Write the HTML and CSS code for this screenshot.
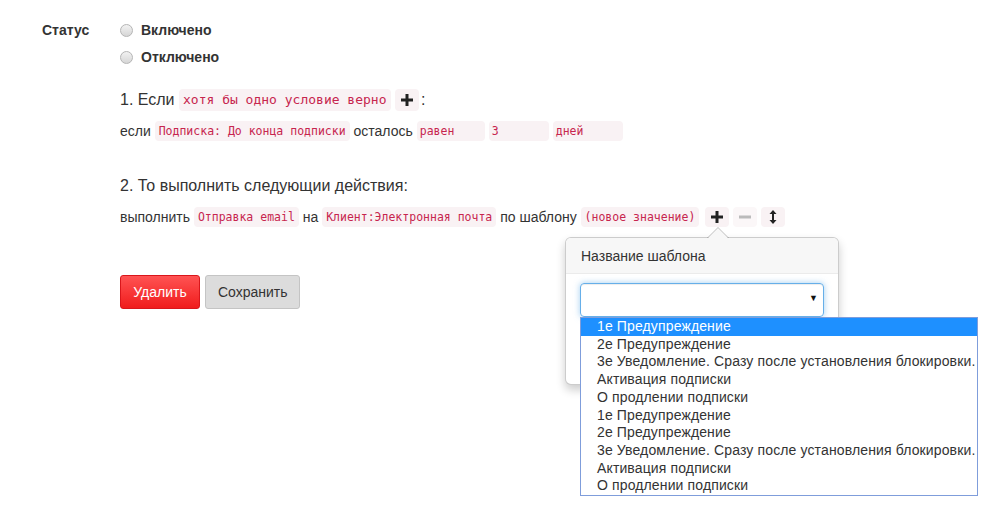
FILE: index.html
```html
<!DOCTYPE html>
<html lang="ru">
<head>
<meta charset="utf-8">
<link rel="stylesheet" href="styles.css">
</head>
<body>
<div class="page">
  <div class="status">
    <div class="status-label">Статус</div>
    <div class="radios">
      <div class="radio"><span class="dot"></span>Включено</div>
      <div class="radio"><span class="dot"></span>Отключено</div>
    </div>
  </div>

  <div class="rule">
    <div class="head head1">1. Если <code class="big">хотя бы одно условие верно</code> <span class="btn-ico big-ico"><svg width="12" height="12" viewBox="0 0 12 12"><rect x="4.5" y="0" width="3" height="12" fill="#222"/><rect x="0" y="4.5" width="12" height="3" fill="#222"/></svg></span><span class="colon">:</span></div>
    <div class="line line1">если <code>Подписка: До конца подписки</code> осталось<code class="fld w68">равен</code><code class="fld w60">3</code><code class="fld w70">дней</code></div>

    <div class="head head2">2. То выполнить следующии действия:</div>
    <div class="line line2">выполнить <code>Отправка email</code> на <code>Клиент:Электронная почта</code> по шаблону <code>(новое значение)</code><span class="ico-group"><span class="btn-ico"><svg width="12" height="12" viewBox="0 0 12 12"><rect x="4.5" y="0" width="3" height="12" fill="#222"/><rect x="0" y="4.5" width="12" height="3" fill="#222"/></svg></span><span class="btn-ico dim"><svg width="12" height="12" viewBox="0 0 12 12"><rect x="0" y="4.5" width="12" height="3" fill="#bbb"/></svg></span><span class="btn-ico"><svg width="8" height="14" viewBox="0 0 8 14"><rect x="3" y="3" width="2" height="8" fill="#222"/><path d="M4 0 L7.5 4 L0.5 4 Z" fill="#222"/><path d="M4 14 L7.5 10 L0.5 10 Z" fill="#222"/></svg></span></span></div>

    <div class="actions">
      <button class="btn btn-danger">Удалить</button>
      <button class="btn btn-default">Сохранить</button>
    </div>
  </div>

  <div class="popover">
    <div class="arrow"></div>
    <div class="popover-title">Название шаблона</div>
    <div class="popover-body">
      <div class="select"><span class="caret">▼</span></div>
    </div>
  </div>

  <ul class="options">
    <li class="selected">1е Предупреждение</li>
    <li>2е Предупреждение</li>
    <li>3е Уведомление. Сразу после установления блокировки.</li>
    <li>Активация подписки</li>
    <li>О продлении подписки</li>
    <li>1е Предупреждение</li>
    <li>2е Предупреждение</li>
    <li>3е Уведомление. Сразу после установления блокировки.</li>
    <li>Активация подписки</li>
    <li>О продлении подписки</li>
  </ul>
</div>
</body>
</html>
```

FILE: styles.css
```css
html, body {
  margin: 0;
  padding: 0;
  background: #fff;
}
body {
  font-family: "Liberation Sans", Arial, sans-serif;
  font-size: 14px;
  color: #333;
}
.page {
  position: relative;
  width: 993px;
  height: 519px;
  overflow: hidden;
}
.status {
  display: flex;
  padding: 21px 0 0 42px;
}
.status-label {
  width: 78px;
  font-weight: bold;
  line-height: 18px;
}
.radios {
  display: flex;
  flex-direction: column;
  gap: 9px;
}
.radio {
  display: flex;
  align-items: center;
  font-weight: bold;
  line-height: 18px;
  color: #333;
}
.dot {
  display: inline-block;
  width: 11px;
  height: 11px;
  border-radius: 50%;
  border: 1px solid #b5b5b5;
  background: linear-gradient(#f2f2f2, #d6d6d6);
  margin-right: 8px;
}
.rule {
  padding-left: 120px;
}
.head {
  font-size: 16px;
  line-height: 22px;
  height: 22px;
}
.head1 {
  margin-top: 23px;
}
.line {
  line-height: 20px;
  height: 20px;
  white-space: nowrap;
}
.line1 {
  margin-top: 10px;
}
.head2 {
  margin-top: 34px;
}
.line2 {
  margin-top: 10px;
}
code {
  font-family: "DejaVu Sans Mono", "Liberation Mono", monospace;
  font-size: 11.5px;
  color: #c7254e;
  background: #f9f2f4;
  border-radius: 4px;
  padding: 0 4px;
  line-height: 20px;
  height: 20px;
  display: inline-block;
  vertical-align: top;
  box-sizing: border-box;
}
code.big {
  font-size: 13px;
  height: 22px;
  line-height: 22px;
  padding: 0 4px;
}
code.fld {
  padding: 0 3px;
  margin-left: 4px;
}
.w68 { width: 68px; margin-left: 5px; }
.w60 { width: 60px; }
.w70 { width: 70px; }
.btn-ico {
  display: inline-flex;
  align-items: center;
  justify-content: center;
  width: 24px;
  height: 20px;
  background: #f9f2f4;
  border-radius: 4px;
  vertical-align: top;
}
.big-ico {
  height: 22px;
}
.colon {
  margin-left: 2px;
}
.ico-group {
  display: inline-flex;
  gap: 4px;
  margin-left: 6px;
  vertical-align: top;
}
.btn-ico.dim {
  background: #fbf7f8;
}
.actions {
  margin-top: 48px;
  display: flex;
  gap: 5px;
}
.btn {
  font-family: "Liberation Sans", Arial, sans-serif;
  font-size: 14px;
  height: 34px;
  border-radius: 3px;
  padding: 0 12px;
  cursor: pointer;
}
.btn-danger {
  width: 80px;
  color: #fff;
  background: linear-gradient(#ff5353, #f01c1c);
  border: 1px solid #d9161b;
}
.btn-default {
  width: 95px;
  color: #333;
  background: #dcdcdc;
  border: 1px solid #c4c4c4;
}
.popover {
  position: absolute;
  left: 565px;
  top: 237px;
  width: 272px;
  height: 146px;
  background: #fff;
  border: 1px solid rgba(0,0,0,0.2);
  border-radius: 6px;
  box-shadow: 0 5px 10px rgba(0,0,0,0.2);
}
.arrow {
  position: absolute;
  left: 141px;
  top: -11px;
  width: 0;
  height: 0;
  border-left: 11px solid transparent;
  border-right: 11px solid transparent;
  border-bottom: 11px solid rgba(0,0,0,0.25);
}
.arrow::after {
  content: "";
  position: absolute;
  left: -10px;
  top: 1px;
  border-left: 10px solid transparent;
  border-right: 10px solid transparent;
  border-bottom: 10px solid #f7f7f7;
}
.popover-title {
  background: #f7f7f7;
  border-bottom: 1px solid #ebebeb;
  border-radius: 5px 5px 0 0;
  height: 35px;
  line-height: 36px;
  padding: 0 15px;
  font-size: 14px;
}
.popover-body {
  padding: 9px 14px;
}
.select {
  position: relative;
  height: 32px;
  border: 1px solid #66afe9;
  border-radius: 4px;
  box-shadow: inset 0 1px 1px rgba(0,0,0,.075), 0 0 6px rgba(102,175,233,.6);
}
.caret {
  position: absolute;
  right: 5px;
  top: 9px;
  font-size: 9px;
  color: #111;
}
.options {
  position: absolute;
  left: 580px;
  top: 317px;
  width: 396px;
  margin: 0;
  padding: 0;
  list-style: none;
  background: #fff;
  border: 1px solid #7f9ddb;
  font-size: 14px;
  line-height: 17.7px;
  letter-spacing: 0.13px;
}
.options li {
  padding-left: 16px;
  white-space: nowrap;
  color: #333;
}
.options li.selected {
  background: #1e90ff;
  color: #fff;
}
```
